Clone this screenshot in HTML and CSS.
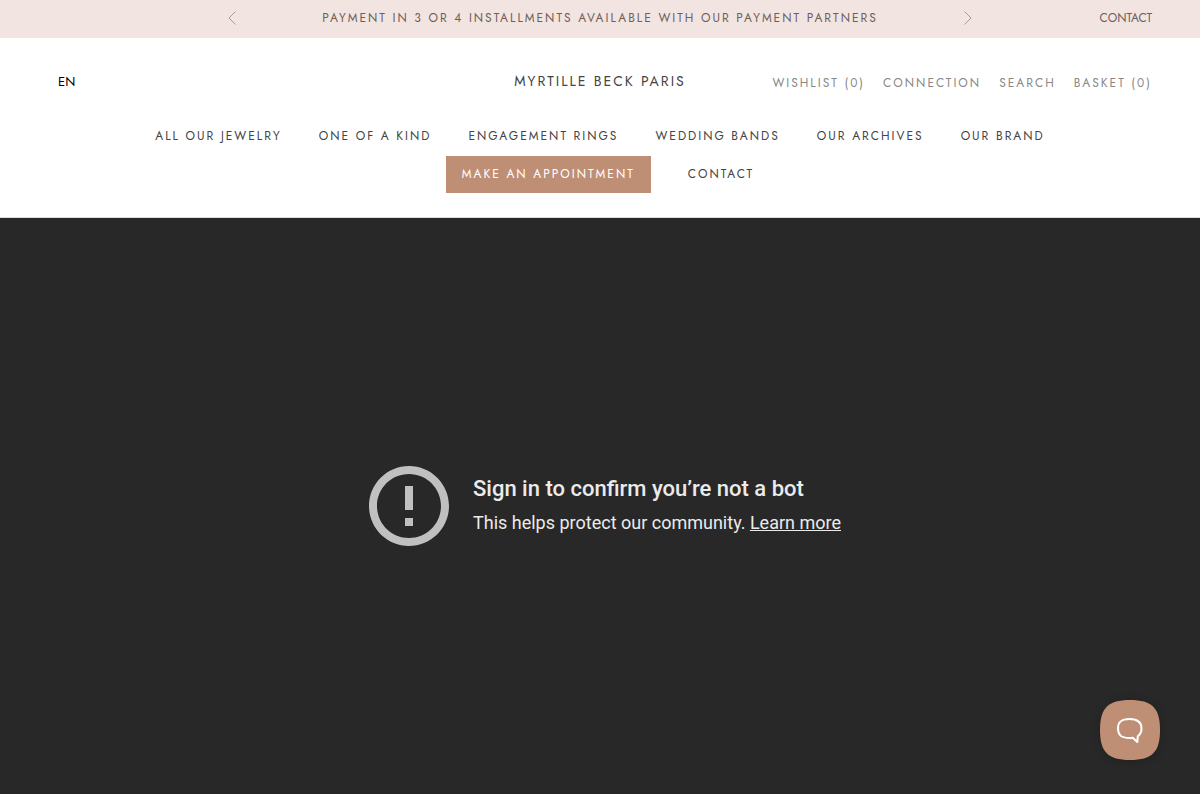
FILE: index.html
```html
<!DOCTYPE html>
<html lang="en">
<head>
    <meta charset="UTF-8">
    <meta name="viewport" content="width=device-width, initial-scale=1.0">
    <title>Myrtille Beck Paris</title>
    <link rel="stylesheet" href="styles.css">
</head>
<body>

<!-- Announcement Bar -->
<div class="announcement">
    <div class="announcement-slider">
        <button type="button" class="arrow" aria-label="Previous">
            <svg width="8" height="14" viewBox="0 0 8 14"><path d="M7.5 .5L1 7l6.500 6.500"/></svg>
        </button>
        <p class="announcement-text">PAYMENT IN 3 OR 4 INSTALLMENTS AVAILABLE WITH OUR PAYMENT PARTNERS</p>
        <button type="button" class="arrow" aria-label="Next">
            <svg width="8" height="14" viewBox="0 0 8 14"><path d="M.5 .5L7 7l-6.500 6.500"/></svg>
        </button>
    </div>
    <a href="#" class="announcement-link">CONTACT</a>
</div>

<!-- Header -->
<header class="header">
    <div class="header-top">
        <button type="button" class="language">EN</button>
        <a href="#" class="logo">MYRTILLE BECK PARIS</a>
        <ul class="tools">
            <li><a href="#">WISHLIST (0)</a></li>
            <li><a href="#">CONNECTION</a></li>
            <li><a href="#">SEARCH</a></li>
            <li><a href="#">BASKET (0)</a></li>
        </ul>
    </div>
    <nav class="main-nav">
        <ul>
            <li><a href="#">ALL OUR JEWELRY</a></li>
            <li><a href="#">ONE OF A KIND</a></li>
            <li><a href="#">ENGAGEMENT RINGS</a></li>
            <li><a href="#">WEDDING BANDS</a></li>
            <li><a href="#">OUR ARCHIVES</a></li>
            <li><a href="#">OUR BRAND</a></li>
            <li><a href="#" class="appointment">MAKE AN APPOINTMENT</a></li>
            <li><a href="#">CONTACT</a></li>
        </ul>
    </nav>
</header>

<!-- Video -->
<main class="video">
    <div class="video-error">
        <svg class="error-icon" viewBox="2 2 20 20"><path d="M11 15h2v2h-2v-2zm0-8h2v6h-2V7zm.99-5C6.470 2 2 6.480 2 12s4.470 10 9.990 10C17.520 22 22 17.520 22 12S17.520 2 11.990 2zM12 20c-4.420 0-8-3.580-8-8s3.580-8 8-8 8 3.580 8 8-3.580 8-8 8z"/></svg>
        <div>
            <h1 class="error-title">Sign in to confirm you’re not a bot</h1>
            <p class="error-text">This helps protect our community. <a href="#">Learn more</a></p>
        </div>
    </div>
</main>

<!-- Chat Button -->
<button type="button" class="chat" aria-label="Open chat">
    <svg class="chat-shape" viewBox="0 0 60 60"><path d="M30 0C52 0 60 8 60 30S52 60 30 60 0 52 0 30 8 0 30 0z"/></svg>
    <svg class="chat-icon" width="28" height="28" viewBox="0 0 28 28"><path d="M13.500 3C5 3 2 6 2 12.500S5 22 13.500 22c1.200 0 2.300 0 3.300-.2L21.300 26l.5-5.800C24.300 18.500 25.500 16.200 25.500 12.500 25.500 6 22 3 13.500 3z"/></svg>
</button>

</body>
</html>
```
FILE: styles.css
```css
* {
    box-sizing: border-box;
}

body {
    font-family: Jost, Lato, sans-serif;
    font-size: 12px;
    margin: 0;
    padding-bottom: 6px;
    color: #444;
    background-color: #fff;
    min-height: 100vh;
    display: flex;
    flex-direction: column;
}

a {
    color: inherit;
    text-decoration: none;
}

ul {
    list-style: none;
    margin: 0;
    padding: 0;
}

button {
    font-family: inherit;
    border: none;
    background: none;
    padding: 0;
    cursor: pointer;
}

/* Announcement Bar */
.announcement {
    display: grid;
    grid-template-columns: 1fr 62% 1fr;
    align-items: center;
    height: 38px;
    padding: 0 48px 2px;
    background-color: #f2e4e0;
    color: #6e5f5c;
}

.announcement-slider {
    grid-column: 2;
    display: flex;
    align-items: center;
    justify-content: space-between;
    margin: 0 -30px;
}

.announcement-text {
    margin: 0;
    letter-spacing: 2px;
}

.announcement-link {
    justify-self: end;
}

.arrow svg {
    display: block;
    fill: none;
    stroke: #a89a96;
}

/* Header */
.header {
    border-bottom: 1px solid #ddd;
    padding: 24px 48px 24px;
}

.header-top {
    display: grid;
    grid-template-columns: 1fr auto 1fr;
    align-items: center;
    height: 38px;
}

.language {
    justify-self: start;
    padding: 0 10px;
    font-size: 13px;
    color: #000;
}

.logo {
    font-size: 14px;
    letter-spacing: 2px;
}

.tools {
    display: flex;
    justify-content: flex-end;
    gap: 18px;
    padding-top: 3px;
    color: #888;
    letter-spacing: 2px;
}

.main-nav {
    padding-top: 18px;
}

.main-nav ul {
    display: flex;
    flex-wrap: wrap;
    justify-content: center;
    gap: 1px 37px;
    max-width: 960px;
    margin: 0 auto;
    letter-spacing: 2px;
    line-height: 37px;
}

.main-nav a {
    display: block;
}

.main-nav .appointment {
    padding: 0 16px;
    background-color: #bf8f75;
    color: #fff;
}

/* Video */
.video {
    flex: 1;
    display: flex;
    align-items: center;
    justify-content: center;
    background-color: #282828;
    font-family: Roboto, sans-serif;
    color: #ebebeb;
}

.video-error {
    display: flex;
    align-items: center;
    gap: 24px;
    padding-left: 10px;
}

.error-icon {
    width: 80px;
    height: 80px;
    fill: #c0c0c0;
}

.error-title {
    margin: 0 0 8px;
    font-size: 22px;
    font-weight: 500;
    line-height: 28px;
}

.error-text {
    margin: 0 0 2px;
    font-size: 18px;
    line-height: 24px;
}

.error-text a {
    text-decoration: underline;
}

/* Chat Button */
.chat {
    position: fixed;
    right: 40px;
    bottom: 40px;
    width: 60px;
    height: 60px;
    filter: drop-shadow(0 1px 4px rgba(0, 0, 0, 0.2));
}

.chat-shape {
    display: block;
    fill: #bf8f75;
}

.chat-icon {
    position: absolute;
    top: 16px;
    left: 16px;
    fill: none;
    stroke: #fff;
    stroke-width: 2;
    stroke-linejoin: round;
}
```
